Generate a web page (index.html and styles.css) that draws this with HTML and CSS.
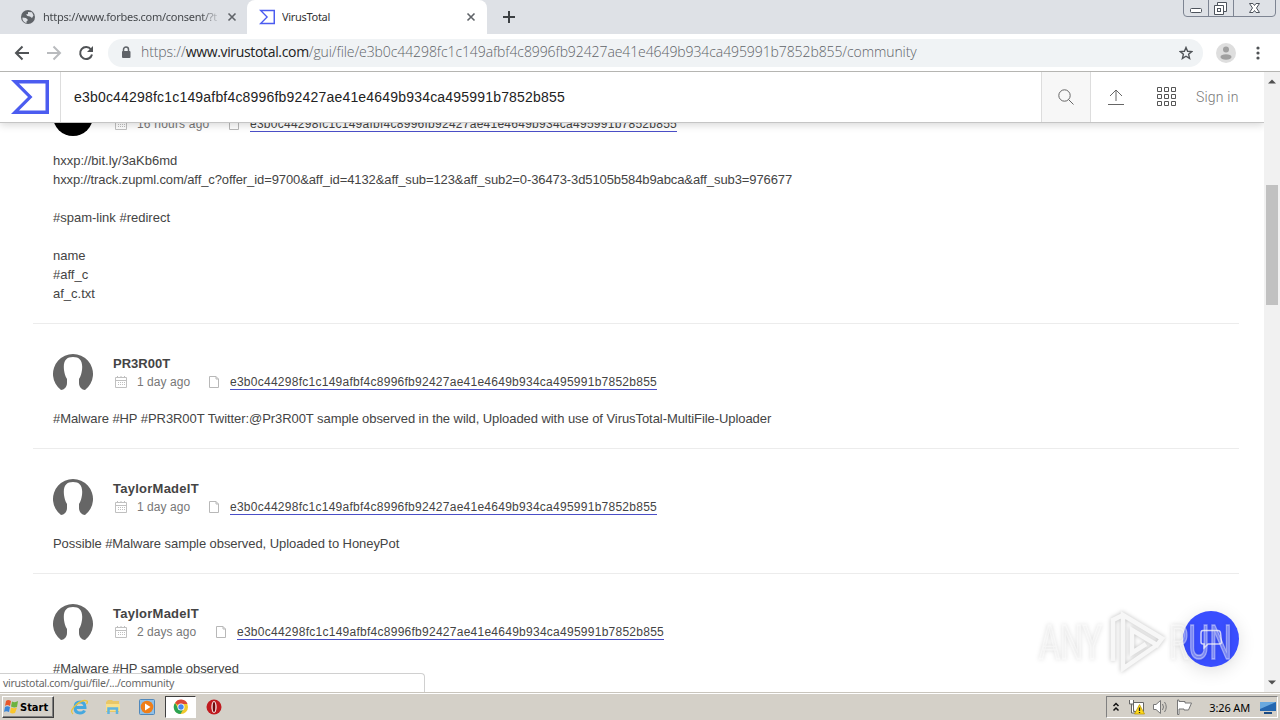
FILE: index.html
```html
<!DOCTYPE html>
<html lang="en">
<head>
    <meta charset="UTF-8">
    <meta name="viewport" content="width=device-width, initial-scale=1.0">
    <title>VirusTotal</title>
    <link rel="stylesheet" href="styles.css">
</head>
<body>
    <svg class="defs" width="0" height="0">
        <symbol id="logo" viewBox="0 0 38 34">
            <path fill="#4b5cf0" fill-rule="evenodd" d="M0 0H38V34H0L17 17ZM8 3.5L21.5 17L8 30.5H34.5V3.5Z"/>
        </symbol>
        <symbol id="person" viewBox="0 0 40 40">
            <path fill="#666" d="M8 36A20 20 0 1 1 32 36C29 36 26 33 26 29V25C28 22 28.500 19 29 16C30 7 27 3 20 3S10 7 11 16C11.500 19 12 22 14 25V29C14 33 11 36 8 36Z"/>
        </symbol>
        <symbol id="calendar" viewBox="0 0 14 14">
            <path fill="none" stroke="#c0c0c0" d="M1.500 2.500H12.500V12.500H1.500ZM3.500 1V3M7 1V3M10.500 1V3M1.500 5.500H12.500"/>
            <path fill="none" stroke="#c0c0c0" stroke-dasharray="1 1" d="M4 7.500H11M4 9.500H11"/>
        </symbol>
        <symbol id="page" viewBox="0 0 12 14">
            <path fill="none" stroke="#b8b8b8" d="M1.500 1.500H8L10.500 4V12.500H1.500ZM8 1.500V4H10.500"/>
        </symbol>
        <symbol id="close" viewBox="0 0 10 10">
            <path stroke="#5f6368" stroke-width="1.600" d="M1.500 1.500L8.500 8.500M8.500 1.500L1.500 8.500"/>
        </symbol>
    </svg>

    <div class="tabstrip">
        <div class="tab">
            <svg class="favicon" viewBox="0 0 16 16"><circle cx="8" cy="8" r="7" fill="#5f6368"/><path fill="#dee1e6" d="M2.500 8.500L6 9L8 11L6.500 12.500V14C4 13.500 2 11 2.500 8.500ZM8 3L12 3.200L13.500 6.500L12 9L10 7.500L7.500 7L6 5.500L8 5Z"/></svg>
            <span class="tab-title faded">https://www.forbes.com/consent/?t</span>
            <svg class="tab-close"><use href="#close"/></svg>
        </div>
        <div class="tab active">
            <svg class="favicon"><use href="#logo"/></svg>
            <span class="tab-title">VirusTotal</span>
            <svg class="tab-close"><use href="#close"/></svg>
        </div>
        <svg class="new-tab" viewBox="0 0 12 12"><path stroke="#3c4043" stroke-width="2" d="M6 0V12M0 6H12"/></svg>
        <svg class="window-buttons" width="94" height="17" viewBox="0 0 94 17" fill="none" stroke="#7d8492">
            <path d="M.500 0V13Q.500 16.500 4 16.500H89Q92.500 16.500 92.500 13V0M25.500 0V16M50.500 0V16"/>
            <g stroke="#4d535c">
                <rect x="7.500" y="8.500" width="11" height="4" rx="1" fill="#fff"/>
                <path fill="#fff" d="M34.500 2.500H43.500V11.500H34.500Z"/>
                <path fill="#fff" d="M31.500 5.500H40.500V14.500H31.500Z"/><rect x="34.500" y="8.500" width="3" height="3"/>
                <path fill="#fff" d="M66.500 3.500H70L71.500 5.500L73 3.500H76.500L73.500 8L76.500 12.500H73L71.500 10.500L70 12.500H66.500L69.500 8Z"/>
            </g>
        </svg>
    </div>

    <div class="toolbar">
        <svg class="nav-icons" width="96" height="36" viewBox="0 0 96 36" fill="none" stroke="#505356" stroke-width="2">
            <path d="M29 18H16M22.500 11.500L16 18L22.500 24.500"/>
            <path stroke="#b9bbbe" d="M47 18H60M53.500 11.500L60 18L53.500 24.500"/>
            <path d="M91 14.500A6 6 0 1 0 92 19.500"/><path fill="#505356" stroke="none" d="M93 11V17H87Z"/>
        </svg>
        <div class="omnibox">
            <svg width="10" height="13" viewBox="0 0 10 13"><path fill="none" stroke="#5f6368" stroke-width="1.500" d="M2.500 6V3.500A2.500 2.500 0 0 1 7.500 3.500V6"/><rect x="1" y="5" width="8.500" height="7" rx="1" fill="#5f6368"/></svg>
            <span class="url">https://<b>www.virustotal.com</b>/gui/file/e3b0c44298fc1c149afbf4c8996fb92427ae41e4649b934ca495991b7852b855/community</span>
            <svg class="star" width="14" height="14" viewBox="0 0 14 14"><path fill="none" stroke="#505458" stroke-width="1.400" d="M7 1.500L8.600 5.300L12.800 5.600L9.600 8.300L10.600 12.400L7 10.200L3.400 12.400L4.400 8.300L1.200 5.600L5.400 5.300Z"/></svg>
        </div>
        <svg class="profile" width="20" height="20" viewBox="0 0 20 20"><circle cx="10" cy="10" r="10" fill="#dedede"/><circle cx="10" cy="6.500" r="3" fill="#a0a0a0"/><ellipse cx="10" cy="14" rx="5.500" ry="2.700" fill="#a0a0a0"/></svg>
        <svg width="4" height="14" viewBox="0 0 4 14" fill="#505356"><circle cx="2" cy="2" r="1.600"/><circle cx="2" cy="7" r="1.600"/><circle cx="2" cy="12" r="1.600"/></svg>
    </div>

    <div class="viewport">
        <div class="page">
            <header class="header">
                <div class="brand"><svg width="38" height="34"><use href="#logo"/></svg></div>
                <div class="query"><span>e3b0c44298fc1c149afbf4c8996fb92427ae41e4649b934ca495991b7852b855</span></div>
                <div class="search"><svg width="16" height="16" viewBox="0 0 16 16" fill="none" stroke="#666"><circle cx="6.500" cy="6.500" r="5.700"/><path d="M10.500 10.500L15.500 15.500"/></svg></div>
                <div class="action"><svg width="16" height="16" viewBox="0 0 16 16" fill="none" stroke="#666"><path d="M8 12V1M2 7L8 1L14 7M0 15.500H16"/></svg></div>
                <div class="action"><svg width="19" height="20" viewBox="0 0 19 20" fill="none" stroke="#555"><path d="M.500 .500H4.500V4.500H.500ZM7.500 .500H11.500V4.500H7.500ZM14.500 .500H18.500V4.500H14.500ZM.500 7.500H4.500V11.500H.500ZM7.500 7.500H11.500V11.500H7.500ZM14.500 7.500H18.500V11.500H14.500ZM.500 14.500H4.500V18.500H.500ZM7.500 14.500H11.500V18.500H7.500ZM14.500 14.500H18.500V18.500H14.500Z"/></svg></div>
                <span class="sign-in">Sign in</span>
            </header>

            <main class="comments">
                <article class="comment">
                    <div class="comment-head">
                        <div class="avatar dark"></div>
                        <div>
                            <div class="author">&nbsp;</div>
                            <div class="meta">
                                <svg class="cal"><use href="#calendar"/></svg><span class="age hours">16 hours ago</span>
                                <svg class="doc"><use href="#page"/></svg><a class="hash">e3b0c44298fc1c149afbf4c8996fb92427ae41e4649b934ca495991b7852b855</a>
                            </div>
                        </div>
                    </div>
                    <div class="text">hxxp://bit.ly/3aKb6md<br><span class="long-link">hxxp://track.zupml.com/aff_c?offer_id=9700&amp;aff_id=4132&amp;aff_sub=123&amp;aff_sub2=0-36473-3d5105b584b9abca&amp;aff_sub3=976677</span><br><br>#spam-link #redirect<br><br>name<br>#aff_c<br>af_c.txt</div>
                </article>
                <article class="comment">
                    <div class="comment-head">
                        <svg class="avatar"><use href="#person"/></svg>
                        <div>
                            <div class="author">PR3R00T</div>
                            <div class="meta">
                                <svg class="cal"><use href="#calendar"/></svg><span class="age">1 day ago</span>
                                <svg class="doc"><use href="#page"/></svg><a class="hash">e3b0c44298fc1c149afbf4c8996fb92427ae41e4649b934ca495991b7852b855</a>
                            </div>
                        </div>
                    </div>
                    <div class="text tight">#Malware #HP #PR3R00T Twitter:@Pr3R00T sample observed in the wild, Uploaded with use of VirusTotal-MultiFile-Uploader</div>
                </article>
                <article class="comment">
                    <div class="comment-head">
                        <svg class="avatar"><use href="#person"/></svg>
                        <div>
                            <div class="author wide">TaylorMadeIT</div>
                            <div class="meta">
                                <svg class="cal"><use href="#calendar"/></svg><span class="age">1 day ago</span>
                                <svg class="doc"><use href="#page"/></svg><a class="hash">e3b0c44298fc1c149afbf4c8996fb92427ae41e4649b934ca495991b7852b855</a>
                            </div>
                        </div>
                    </div>
                    <div class="text tight">Possible #Malware sample observed, Uploaded to HoneyPot</div>
                </article>
                <article class="comment">
                    <div class="comment-head">
                        <svg class="avatar"><use href="#person"/></svg>
                        <div>
                            <div class="author wide">TaylorMadeIT</div>
                            <div class="meta">
                                <svg class="cal"><use href="#calendar"/></svg><span class="age days">2 days ago</span>
                                <svg class="doc"><use href="#page"/></svg><a class="hash">e3b0c44298fc1c149afbf4c8996fb92427ae41e4649b934ca495991b7852b855</a>
                            </div>
                        </div>
                    </div>
                    <div class="text tight">#Malware #HP sample observed</div>
                </article>
            </main>

            <div class="chat">
                <svg width="24" height="22" viewBox="0 0 24 22" fill="none" stroke="#d5d8ff" stroke-width="1.500"><path d="M4 2.500H19Q21 2.500 21.500 5L22.500 14Q22.500 16 20 16H9L5 20V16H4Q2 16 2 14V5Q2 2.500 4 2.500Z"/></svg>
            </div>
            <svg class="watermark" width="210" height="76" viewBox="0 0 210 76">
                <g fill="#fff" fill-opacity=".35" stroke="#fff" stroke-opacity=".4" stroke-width="1.500">
                    <text x="4" y="54" textLength="63" lengthAdjust="spacingAndGlyphs">ANY</text>
                    <text x="134" y="54" textLength="63" lengthAdjust="spacingAndGlyphs">RUN</text>
                </g>
                <path fill="none" stroke="#f7f7f7" stroke-width="4.500" d="M122 40L88 63.500V10L127 33.500L122 40L97 25V48L111 39M88 10L78 15V56"/>
            </svg>
            <div class="status">virustotal.com/gui/file/.../community</div>
        </div>
        <div class="scrollbar">
            <svg width="8" height="5" viewBox="0 0 8 5"><path fill="#505050" d="M0 4.500L4 .500L8 4.500Z"/></svg>
            <div class="thumb"></div>
            <svg width="8" height="5" viewBox="0 0 8 5"><path fill="#505050" d="M0 .500L4 4.500L8 .500Z"/></svg>
        </div>
    </div>

    <div class="taskbar">
        <div class="start">
            <svg width="16" height="16" viewBox="0 0 16 16"><path fill="#e8572a" d="M3 2Q5 0 8 2L7 7Q4 5 2 7Z"/><path fill="#6cb33f" d="M9 2.500Q12 4 15 2L14 8Q11 9 8 7.500Z"/><path fill="#3b86d8" d="M2 8Q4 6.500 7 8L6 13Q3 11.500 1 13Z"/><path fill="#f9c62c" d="M8 8.500Q11 10 14 8.500L12 14Q9 15 7 13.500Z"/></svg>
            <span>Start</span>
        </div>
        <svg class="task ie" viewBox="0 0 20 20" fill="none"><path stroke="#45a8df" stroke-width="3" d="M5 10.500H15Q15 5 10 5T5 10.500T10 16Q13.500 16 14.500 13.500"/><path stroke="#ecc337" stroke-width="1.300" d="M3 17Q-1 14 6 8T17 4Q18 5 16.500 7"/></svg>
        <svg class="task explorer" viewBox="0 0 20 20"><path fill="#e9c767" d="M3 5L5 3H9L10 4H16V15H3Z"/><path fill="#f9e08b" d="M3 7H17V14H3Z"/><path fill="none" stroke="#5fb4e0" stroke-width="2.500" d="M5.500 17V11.500H14V17"/></svg>
        <svg class="task" viewBox="0 0 20 20"><rect x="2.500" y="2.500" width="15" height="15" rx="1" fill="#8fc0e8" stroke="#5088bb"/><circle cx="10" cy="10" r="6.300" fill="#ef7e18"/><path fill="#fff" d="M8 6.500L13.500 10L8 13.500Z"/></svg>
        <div class="task-active">
            <svg width="16" height="16" viewBox="0 0 16 16"><circle cx="8" cy="8" r="7" fill="#f1c92d"/><path fill="#dd4937" d="M8 8L2 4A7 7 0 0 1 14.500 5H8Z"/><path fill="#2ba352" d="M2 4A7 7 0 0 0 7.500 15L10.500 10L8 8L5 9Z"/><circle cx="8" cy="8" r="3.500" fill="#fff"/><circle cx="8" cy="8" r="2.700" fill="#4688ef"/></svg>
        </div>
        <svg class="task opera" viewBox="0 0 20 20"><circle cx="10" cy="10" r="7.500" fill="#c01a1f"/><ellipse cx="10" cy="10" rx="2.700" ry="6" fill="#f4dede"/><ellipse cx="10" cy="10" rx="1.300" ry="5" fill="#70090c"/></svg>
        <div class="tray">
            <svg width="8" height="10" viewBox="0 0 8 10" fill="none" stroke="#111" stroke-width="1.500"><path d="M1.500 4L4 1.500L6.500 4M1.500 8.500L4 6L6.500 8.500"/></svg>
            <svg class="network" width="17" height="16" viewBox="0 0 17 16"><path fill="#fff" stroke="#666" d="M5.500 3.500H15.500V12.500H5.500ZM1.500 1V5H5.500V1M3.500 5V14H8"/><path fill="#ffd91a" stroke="#b49000" stroke-width=".7" d="M11.500 5.500L16.500 15H6.500Z"/><path stroke="#222" stroke-width="1.300" d="M11.500 8.500V12M11.500 13V14"/></svg>
            <svg width="17" height="16" viewBox="0 0 17 16" fill="none" stroke="#777"><path fill="#fff" d="M1.500 5.500H4L8.500 1.500V14.500L4 10.500H1.500Z"/><path d="M10.500 5Q12.500 8 10.500 11M12.500 3Q16 8 12.500 13"/></svg>
            <svg width="17" height="16" viewBox="0 0 17 16"><path fill="#fff" stroke="#777" d="M1.500 1V15.500H3V10H8V11H12.500L15.500 4H9V2.500H3V1Z"/></svg>
            <span class="clock">3:26 AM</span>
            <svg width="16" height="13" viewBox="0 0 16 13"><path fill="#2467b0" d="M0 1H16V10H0Z"/><path fill="#69a9df" d="M0 1H16L0 8Z"/><path fill="#194a83" d="M4 11H12V13H4Z"/></svg>
        </div>
    </div>
</body>
</html>
```
FILE: styles.css
```css
* {
    box-sizing: border-box;
}

body {
    margin: 0;
    width: 1280px;
    height: 720px;
    overflow: hidden;
    display: flex;
    flex-direction: column;
    font-family: "Liberation Sans", Arial, sans-serif;
    color: #444;
    background: #fff;
}

svg {
    flex: none;
    display: block;
}

.defs {
    position: absolute;
}

/* Browser chrome */
.tabstrip {
    height: 34px;
    flex: none;
    display: flex;
    align-items: center;
    background: #dee1e6;
}

.tab {
    width: 247px;
    height: 34px;
    padding: 0 10px 0 20px;
    display: flex;
    align-items: center;
    font: 11px "Noto Sans", sans-serif;
    letter-spacing: -0.3px;
    color: #45484c;
}

.tab.active {
    width: 240px;
    padding-left: 12px;
    background: #fff;
    border-radius: 8px 8px 0 0;
    color: #333;
}

.favicon {
    width: 16px;
    height: 16px;
    margin-right: 7px;
}

.tab-title {
    flex: 1;
    margin-top: -1px;
    overflow: hidden;
    white-space: nowrap;
}

.faded {
    letter-spacing: -0.26px;
    -webkit-mask-image: linear-gradient(90deg, #000 158px, transparent 178px);
    mask-image: linear-gradient(90deg, #000 158px, transparent 178px);
}

.tab-close {
    width: 10px;
    height: 10px;
    margin-left: 8px;
}

.active .tab-close {
    margin-right: 1px;
}

.new-tab {
    width: 12px;
    height: 12px;
    margin-left: 16px;
}

.window-buttons {
    margin: 0 3px 17px auto;
}

.toolbar {
    height: 38px;
    flex: none;
    display: flex;
    align-items: center;
    border-bottom: 1px solid #b5b5b2;
}

.omnibox {
    width: 1095px;
    height: 28px;
    margin-left: 12px;
    padding: 0 10px 0 13px;
    display: flex;
    align-items: center;
    background: #f0f3f5;
    border-radius: 14px;
}

.url {
    margin: -2px 0 0 10px;
    font: 300 14px "Open Sans", sans-serif;
    letter-spacing: -0.09px;
    color: #5f6368;
    white-space: nowrap;
}

.url b {
    font-weight: 400;
    letter-spacing: -0.34px;
    color: #222;
}

.star {
    margin-left: auto;
}

.profile {
    margin: 0 20px 0 13px;
}

/* Page */
.viewport {
    height: 620px;
    flex: none;
    display: flex;
}

.page {
    position: relative;
    width: 1264px;
    overflow: hidden;
}

.header {
    position: relative;
    z-index: 1;
    height: 51px;
    display: flex;
    align-items: stretch;
    background: #fff;
    border-bottom: 1px solid #c5c5c5;
    box-shadow: 0 2px 8px rgba(0, 0, 0, 0.16);
}

.brand {
    width: 61px;
    padding: 8px 0 0 11px;
    border-right: 1px solid #ddd;
}

.query {
    flex: 1;
    padding-left: 13px;
    font-size: 14px;
    line-height: 50px;
    letter-spacing: 0.19px;
    color: #222;
}

.search,
.action {
    width: 50px;
    display: flex;
    align-items: center;
    justify-content: center;
}

.search {
    background: #f7f7f7;
    border: solid #ddd;
    border-width: 0 1px;
}

.sign-in {
    width: 73px;
    padding-left: 5px;
    font: 300 14px/50px Roboto, sans-serif;
    letter-spacing: 0.2px;
    color: #777;
}

.comments {
    margin: -57px 25px 0 33px;
}

.comment {
    padding: 30px 20px 20px;
    border-bottom: 1px solid #ececec;
}

.comment-head {
    height: 40px;
    margin-bottom: 15px;
    display: flex;
}

.avatar {
    width: 40px;
    height: 40px;
    margin-right: 20px;
}

.avatar.dark {
    border-radius: 50%;
    background: #000;
}

.author {
    height: 18px;
    font-size: 13px;
    font-weight: bold;
    line-height: 19px;
}

.author.wide {
    letter-spacing: 0.25px;
}

.meta {
    height: 19px;
    display: flex;
    align-items: center;
    font-size: 12px;
}

.cal {
    width: 14px;
    height: 14px;
    margin: 0 9px 0 1px;
}

.age {
    width: 71px;
    color: #777;
    letter-spacing: 0.05px;
    white-space: nowrap;
}

.age.days {
    width: 78px;
}

.age.hours {
    width: 91px;
    letter-spacing: 0.2px;
}

.doc {
    width: 12px;
    height: 14px;
    margin-right: 10px;
}

.hash {
    height: 16px;
    padding-top: 2px;
    line-height: 13px;
    letter-spacing: 0.26px;
    border-bottom: 1px solid #4b4fc8;
}

.text {
    font-size: 13px;
    line-height: 19px;
    white-space: nowrap;
}

.text.tight {
    letter-spacing: -0.065px;
}

.long-link {
    letter-spacing: -0.1px;
}

.chat {
    position: absolute;
    left: 1183px;
    top: 539px;
    width: 56px;
    height: 56px;
    display: flex;
    align-items: center;
    justify-content: center;
    border-radius: 50%;
    background: #394eff;
    box-shadow: 0 4px 18px rgba(0, 0, 0, 0.12);
}

.watermark {
    position: absolute;
    left: 1035px;
    top: 533px;
    font: 400 48px Roboto, sans-serif;
    filter: drop-shadow(0 0 2px rgba(0, 0, 0, 0.25));
}

.status {
    position: absolute;
    left: 0;
    bottom: 0;
    width: 425px;
    height: 19px;
    padding-left: 3px;
    font: 10.5px/18px "Noto Sans", sans-serif;
    letter-spacing: -0.27px;
    color: #666;
    background: #fff;
    border: solid #d0d0d0;
    border-width: 1px 1px 0 0;
    border-radius: 0 4px 0 0;
}

.scrollbar {
    width: 16px;
    padding: 7px 0;
    display: flex;
    flex-direction: column;
    align-items: center;
    justify-content: space-between;
    background: #f1f1f1;
}

.thumb {
    width: 12px;
    height: 120px;
    margin: 101px 0 auto;
    background: #c1c1c1;
}

/* Taskbar */
.taskbar {
    height: 28px;
    flex: none;
    padding: 1px 2px 0;
    display: flex;
    align-items: center;
    background: #d4d0c8;
    border-top: 1px solid #c9c5bd;
    box-shadow: inset 0 1px #fff;
}

.start {
    width: 52px;
    height: 22px;
    display: flex;
    align-items: center;
    gap: 1px;
    border: 1px solid;
    border-color: #fff #404040 #404040 #fff;
    box-shadow: inset -1px -1px #808080;
    font: bold 11px "DejaVu Sans Condensed", "DejaVu Sans", sans-serif;
    color: #000;
}

.task {
    width: 20px;
    height: 20px;
    margin-left: 14px;
}

.task.ie {
    margin-left: 16px;
}

.task.explorer {
    margin-left: 13px;
}

.task-active {
    width: 31px;
    height: 22px;
    margin-left: 8px;
    display: flex;
    align-items: center;
    justify-content: center;
    border: 1px solid;
    border-color: #404040 #fff #fff #404040;
    background: #fff;
}

.task.opera {
    margin-left: 8px;
}

.tray {
    width: 172px;
    height: 22px;
    margin-left: auto;
    padding: 0 1px 0 5px;
    display: flex;
    align-items: center;
    gap: 7px;
    border: 1px solid;
    border-color: #808080 #fff #fff #808080;
}

.network {
    margin-left: 1px;
}

.clock {
    margin: 0 3px 0 auto;
    font: 11px "Noto Sans", sans-serif;
    letter-spacing: -0.15px;
    color: #000;
    white-space: nowrap;
}
```
